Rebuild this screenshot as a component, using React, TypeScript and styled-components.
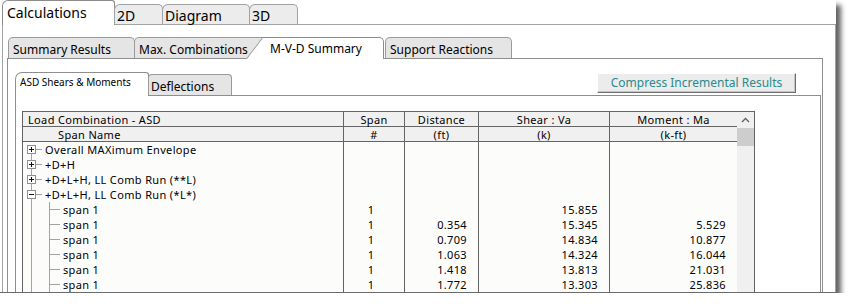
import React from 'react';
import styled, { createGlobalStyle, css } from 'styled-components';

const GlobalStyle = createGlobalStyle`
  html, body { margin: 0; padding: 0; background: #ffffff; }
  body { font-family: "Noto Sans", "DejaVu Sans", sans-serif; color: #000; }
  * { box-sizing: border-box; }
`;

const Window = styled.div`
  width: 836px;
  height: 293px;
  display: flex;
  flex-direction: column;
  background: #fff;
  border-bottom: 1px solid #6a6a6a;
  box-shadow: 5px 5px 5px rgba(0, 0, 0, 0.62);
  overflow: hidden;
`;

const TopTabs = styled.div`
  display: flex;
  align-items: flex-end;
  height: 24px;
  padding-left: 2px;
  position: relative;
  z-index: 1;
`;

const TopTab = styled.div<{ $active?: boolean; $w: number }>`
  width: ${(p) => p.$w}px;
  display: flex;
  align-items: center;
  font-size: 14px;
  white-space: nowrap;
  border: 1px solid #8c8c8c;
  border-bottom: none;
  ${(p) =>
    p.$active
      ? css`
          height: 25px;
          margin-bottom: -1px;
          padding: 0 0 1px 4px;
          background: #fff;
          border-radius: 6px 3px 0 0;
        `
      : css`
          height: 20px;
          margin-left: -1px;
          padding: 1px 0 0 2px;
          background: #ececec;
          border-color: #a2a2a2;
          border-radius: 6px 5px 0 0;
        `}
`;

const MainPanel = styled.div`
  flex: 1;
  display: flex;
  flex-direction: column;
  margin-left: 2px;
  border: 1px solid #a3a3a3;
  border-bottom: none;
  padding: 11px 12px 0 4px;
  min-height: 0;
`;

const SubTabs = styled.div`
  display: flex;
  align-items: flex-end;
  height: 22px;
  padding-left: 2px;
  position: relative;
  z-index: 1;
`;

const SubTab = styled.div<{ $w: number; $gap?: number }>`
  width: ${(p) => p.$w}px;
  height: 21px;
  display: flex;
  align-items: center;
  padding: 2px 0 0 4px;
  margin-left: ${(p) => p.$gap ?? -1}px;
  font-size: 12px;
  white-space: nowrap;
  background: #e5e5e5;
  border: 1px solid #9a9a9a;
  border-bottom: none;
  border-radius: 5px 5px 0 0;
`;

const SubTabActive = styled.div<{ $w: number }>`
  position: relative;
  z-index: 2;
  width: ${(p) => p.$w}px;
  height: 22px;
  margin-bottom: -1px;
  margin-left: -5px;
  display: flex;
  align-items: center;
  padding: 0 0 0 8px;
  font-size: 12px;
  white-space: nowrap;
  background: #fff;
  border-top: 1px solid #8c8c8c;
  border-right: 1px solid #8c8c8c;
  border-radius: 0 5px 0 0;

  &::before {
    content: '';
    position: absolute;
    z-index: -1;
    top: -1px;
    bottom: 0;
    left: -16px;
    width: 24px;
    background: #fff;
    border-top: 1px solid #8c8c8c;
    border-left: 1px solid #8c8c8c;
    transform-origin: 0 100%;
    transform: skewX(-37deg);
  }
`;

const SubPanel = styled.div`
  flex: 1;
  display: flex;
  flex-direction: column;
  border: 1px solid #8e8e8e;
  border-bottom: none;
  padding: 13px 1px 0 7px;
  min-height: 0;
`;

const InnerTabs = styled.div`
  display: flex;
  align-items: flex-end;
  height: 23px;
  position: relative;
  z-index: 1;
`;

const InnerTab = styled.div<{ $active?: boolean; $w: number }>`
  width: ${(p) => p.$w}px;
  display: flex;
  align-items: center;
  white-space: nowrap;
  border: 1px solid #8e8e8e;
  border-bottom: none;
  ${(p) =>
    p.$active
      ? css`
          height: 24px;
          margin-bottom: -1px;
          padding: 0 0 5px 4px;
          font-size: 10px;
          background: #fff;
          border-radius: 7px 3px 0 0;
        `
      : css`
          height: 21px;
          margin-left: -1px;
          padding: 2px 0 0 2px;
          font-size: 12px;
          background: #e5e5e5;
          border-color: #9a9a9a;
          border-radius: 4px 4px 0 0;
        `}
`;

const CompressButton = styled.button`
  align-self: flex-start;
  margin: 1px 25px 0 auto;
  width: 199px;
  height: 20px;
  padding: 0 0 1px;
  font-family: inherit;
  font-size: 12px;
  color: #2a8a8c;
  background: #ececec;
  border: 1px solid;
  border-color: #ffffff #6f6f6f #6f6f6f #ffffff;
  box-shadow: inset -1px -1px 0 #c4c4c4;
`;

const InnerPanel = styled.div`
  flex: 1;
  display: flex;
  border: 1px solid #8e8e8e;
  border-bottom: none;
  padding: 15px 0 0 6px;
  min-height: 0;
`;

const Table = styled.div`
  width: 733px;
  display: flex;
  align-items: stretch;
  border: 1px solid #646464;
  border-bottom: none;
  font-size: 11px;
  letter-spacing: 0.35px;
`;

const Grid = styled.div`
  flex: 1;
  display: flex;
  flex-direction: column;
  background: #fcfcfb;
`;

const COLS = '321px 61px 74px 131px 127px';

const HeadRow = styled.div`
  display: grid;
  grid-template-columns: ${COLS};
  height: 15px;
  flex: none;
  background: #f0f0f0;
  border-bottom: 1px solid #646464;
`;

const HeadCell = styled.div<{ $pl?: number; $last?: boolean }>`
  display: flex;
  align-items: center;
  justify-content: ${(p) => (p.$pl !== undefined ? 'flex-start' : 'center')};
  padding-left: ${(p) => p.$pl ?? 0}px;
  line-height: 1;
  white-space: nowrap;
  border-right: ${(p) => (p.$last ? 'none' : '1px solid #646464')};
`;

const Row = styled.div`
  display: grid;
  grid-template-columns: ${COLS};
  height: 15px;
  flex: none;
`;

const Cell = styled.div<{ $align: 'left' | 'center' | 'right'; $last?: boolean }>`
  display: flex;
  align-items: center;
  justify-content: ${(p) =>
    p.$align === 'left' ? 'flex-start' : p.$align === 'center' ? 'center' : 'flex-end'};
  padding-right: ${(p) => (p.$align === 'right' ? 11 : p.$align === 'center' ? 6 : 0)}px;
  line-height: 1;
  white-space: nowrap;
  border-right: ${(p) => (p.$last ? 'none' : '1px solid #646464')};
`;

const TreeGlyph = styled.svg`
  flex: none;
  display: block;
`;

const Scrollbar = styled.div`
  width: 17px;
  flex: none;
  display: flex;
  flex-direction: column;
  background: #f0f0f0;
`;

const ScrollArrow = styled.div`
  height: 16px;
  display: flex;
  align-items: center;
  justify-content: center;
`;

const ScrollThumb = styled.div`
  height: 18px;
  background: #cdcdcd;
`;

type RootRow = { kind: 'root'; open: boolean; label: string };
type ChildRow = { kind: 'child'; label: string; span: string; dist: string; shear: string; moment: string };
type DataRow = RootRow | ChildRow;

const rows: DataRow[] = [
  { kind: 'root', open: false, label: 'Overall MAXimum Envelope' },
  { kind: 'root', open: false, label: '+D+H' },
  { kind: 'root', open: false, label: '+D+L+H, LL Comb Run (**L)' },
  { kind: 'root', open: true, label: '+D+L+H, LL Comb Run (*L*)' },
  { kind: 'child', label: 'span 1', span: '1', dist: '', shear: '15.855', moment: '' },
  { kind: 'child', label: 'span 1', span: '1', dist: '0.354', shear: '15.345', moment: '5.529' },
  { kind: 'child', label: 'span 1', span: '1', dist: '0.709', shear: '14.834', moment: '10.877' },
  { kind: 'child', label: 'span 1', span: '1', dist: '1.063', shear: '14.324', moment: '16.044' },
  { kind: 'child', label: 'span 1', span: '1', dist: '1.418', shear: '13.813', moment: '21.031' },
  { kind: 'child', label: 'span 1', span: '1', dist: '1.772', shear: '13.303', moment: '25.836' },
];

const LINE = '#a3a3a3';

function RootGlyph({ open, first }: { open: boolean; first: boolean }) {
  return (
    <TreeGlyph width={22} height={15} viewBox="0 0 22 15">
      {!first && <path d="M8.5 0V3" stroke={LINE} />}
      <path d="M8.5 12V15" stroke={LINE} />
      <rect x={4.5} y={3.5} width={8} height={8} fill="#fff" stroke="#8f8f8f" />
      <path d="M6 7.5H11" stroke="#111" />
      {!open && <path d="M8.5 5V10" stroke="#111" />}
      <path d="M13 7.5H19" stroke={LINE} />
    </TreeGlyph>
  );
}

function ChildGlyph() {
  return (
    <TreeGlyph width={40} height={15} viewBox="0 0 40 15">
      <path d="M8.5 0V15" stroke={LINE} />
      <path d="M26.5 0V15" stroke={LINE} />
      <path d="M27 7.5H37" stroke={LINE} />
    </TreeGlyph>
  );
}

export default function App() {
  return (
    <>
      <GlobalStyle />
      <Window>
        <TopTabs>
          <TopTab $active $w={113}>Calculations</TopTab>
          <TopTab $w={49}>2D</TopTab>
          <TopTab $w={88}>Diagram</TopTab>
          <TopTab $w={49}>3D</TopTab>
        </TopTabs>
        <MainPanel>
          <SubTabs>
            <SubTab $w={127}>Summary Results</SubTab>
            <SubTab $w={133}>Max. Combinations</SubTab>
            <SubTabActive $w={122}>M-V-D Summary</SubTabActive>
            <SubTab $w={127} $gap={1}>Support Reactions</SubTab>
          </SubTabs>
          <SubPanel>
            <InnerTabs>
              <InnerTab $active $w={134}>ASD Shears &amp; Moments</InnerTab>
              <InnerTab $w={84}>Deflections</InnerTab>
              <CompressButton type="button">Compress Incremental Results</CompressButton>
            </InnerTabs>
            <InnerPanel>
              <Table>
                <Grid>
                  <HeadRow>
                    <HeadCell $pl={5}>Load Combination - ASD</HeadCell>
                    <HeadCell>Span</HeadCell>
                    <HeadCell>Distance</HeadCell>
                    <HeadCell>Shear : Va</HeadCell>
                    <HeadCell $last>Moment : Ma</HeadCell>
                  </HeadRow>
                  <HeadRow>
                    <HeadCell $pl={35}>Span Name</HeadCell>
                    <HeadCell>#</HeadCell>
                    <HeadCell>(ft)</HeadCell>
                    <HeadCell>(k)</HeadCell>
                    <HeadCell $last>(k-ft)</HeadCell>
                  </HeadRow>
                  {rows.map((r, i) =>
                    r.kind === 'root' ? (
                      <Row key={i}>
                        <Cell $align="left">
                          <RootGlyph open={r.open} first={i === 0} />
                          <span>{r.label}</span>
                        </Cell>
                        <Cell $align="center" />
                        <Cell $align="right" />
                        <Cell $align="right" />
                        <Cell $align="right" $last />
                      </Row>
                    ) : (
                      <Row key={i}>
                        <Cell $align="left">
                          <ChildGlyph />
                          <span>{r.label}</span>
                        </Cell>
                        <Cell $align="center">{r.span}</Cell>
                        <Cell $align="right">{r.dist}</Cell>
                        <Cell $align="right">{r.shear}</Cell>
                        <Cell $align="right" $last>{r.moment}</Cell>
                      </Row>
                    )
                  )}
                </Grid>
                <Scrollbar>
                  <ScrollArrow>
                    <svg width="9" height="6" viewBox="0 0 9 6">
                      <path d="M1 5L4.5 1.5L8 5" fill="none" stroke="#606060" strokeWidth="1.3" />
                    </svg>
                  </ScrollArrow>
                  <ScrollThumb />
                </Scrollbar>
              </Table>
            </InnerPanel>
          </SubPanel>
        </MainPanel>
      </Window>
    </>
  );
}
